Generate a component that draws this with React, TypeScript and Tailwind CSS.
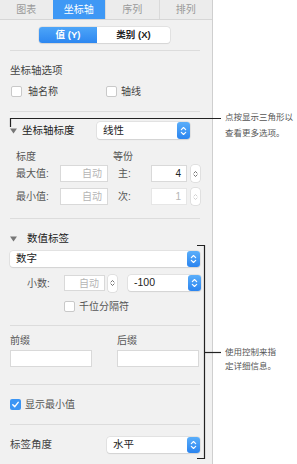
import React from "react";

function Chevrons({ color = "#fff", size = 7 }: { color?: string; size?: number }) {
  return (
    <svg width={size} height={size + 3} viewBox="0 0 8 11" fill="none">
      <path d="M1.5 4 L4 1.5 L6.5 4" stroke={color} strokeWidth="1.3" strokeLinecap="round" strokeLinejoin="round" />
      <path d="M1.5 7 L4 9.5 L6.5 7" stroke={color} strokeWidth="1.3" strokeLinecap="round" strokeLinejoin="round" />
    </svg>
  );
}

function Select({ label, className }: { label: string; className: string }) {
  return (
    <div className={`flex items-center justify-between rounded-[3px] bg-white shadow-[0_0_0_0.5px_#d4d4d4,0_1px_1px_rgba(0,0,0,0.12)] ${className}`}>
      <span className="pl-[6px] text-[10.5px] text-[#222]">{label}</span>
      <div className="flex h-full w-[13px] items-center justify-center rounded-[3px] bg-gradient-to-b from-[#5aaefa] to-[#2a84ef]">
        <Chevrons />
      </div>
    </div>
  );
}

function Stepper({ disabled }: { disabled?: boolean }) {
  return (
    <div className="flex h-[17px] w-[9px] items-center justify-center rounded-[3px] bg-white shadow-[0_0_0_0.5px_#d0d0d0]">
      <Chevrons color={disabled ? "#c8c8c8" : "#555"} size={5} />
    </div>
  );
}

function Input({ value, className, muted }: { value?: string; className: string; muted?: boolean }) {
  return (
    <div className={`flex items-center justify-end border border-[#d9d9d9] bg-white pr-[5px] text-[10px] ${muted ? "text-[#b5b5b5]" : "text-[#222]"} ${className}`}>
      {value}
    </div>
  );
}

function Checkbox({ checked }: { checked?: boolean }) {
  if (checked)
    return (
      <div className="flex h-[11px] w-[11px] items-center justify-center rounded-[2px] bg-[#3b95f4]">
        <svg width="9" height="9" viewBox="0 0 10 10" fill="none">
          <path d="M2 5.2 L4.2 7.4 L8 2.6" stroke="#fff" strokeWidth="1.6" strokeLinecap="round" strokeLinejoin="round" />
        </svg>
      </div>
    );
  return <div className="h-[11px] w-[11px] rounded-[2px] border border-[#c9c9c9] bg-white" />;
}

function Triangle() {
  return (
    <svg width="7" height="6" viewBox="0 0 7 6">
      <path d="M0 0.5 H7 L3.5 5.5 Z" fill="#777" />
    </svg>
  );
}

function Divider({ mt }: { mt: string }) {
  return <div className={`${mt} mr-[12px] h-px bg-[#dcdcdc]`} />;
}

export default function App() {
  const tabs = ["图表", "坐标轴", "序列", "排列"];
  return (
    <div className="relative flex h-[464px] w-[297px] overflow-hidden bg-white font-['Liberation_Sans','Noto_Sans_CJK_SC',sans-serif] text-[#333]">
      <div className="h-full w-[213px] border-r border-[#cfcfcf] bg-[#f1f1f1]">
        {/* tabs */}
        <div className="flex h-[20px] border-b border-[#d6d6d6] bg-[#ececec]">
          {tabs.map((t, i) => (
            <div
              key={t}
              className={`flex flex-1 items-center justify-center text-[10px] ${
                i === 1 ? "bg-[#3e98f5] text-white" : "text-[#9a9a9a]"
              } ${i > 1 ? "border-l border-[#dadada]" : ""}`}
            >
              {t}
            </div>
          ))}
        </div>

        <div className="pl-[10px]">
          {/* segmented */}
          <div className="mt-[7px] ml-[29px] flex h-[16px] w-[131px] overflow-hidden rounded-[3px] bg-white text-[9.5px] font-bold shadow-[0_0_0_0.5px_#d4d4d4,0_1px_1px_rgba(0,0,0,0.1)]">
            <div className="flex w-[58px] items-center justify-center bg-gradient-to-b from-[#4da5f8] to-[#2d87f0] text-white">值 (Y)</div>
            <div className="flex flex-1 items-center justify-center text-[#222]">类别 (X)</div>
          </div>

          <Divider mt="mt-[7px]" />

          <div className="mt-[10px] flex h-[20px] items-center text-[10.5px] text-[#444]">坐标轴选项</div>

          <div className="mt-[2px] flex h-[16px] items-center text-[10px] text-[#444]">
            <div className="ml-px"><Checkbox /></div>
            <span className="ml-[6px]">轴名称</span>
            <div className="ml-[48px]"><Checkbox /></div>
            <span className="ml-[4px]">轴线</span>
          </div>

          <Divider mt="mt-[12px]" />

          <div className="mt-[10px] flex h-[17px] items-center">
            <Triangle />
            <span className="ml-[5px] w-[75px] text-[10.5px] text-[#222]">坐标轴标度</span>
            <Select label="线性" className="h-[17px] w-[93px]" />
          </div>

          <div className="mt-[10px] flex h-[14px] items-center text-[10px] text-[#555]">
            <span className="ml-[6px] w-[97px]">标度</span>
            <span>等份</span>
          </div>

          <div className="mt-[2px] flex h-[17px] items-center text-[10px] text-[#555]">
            <span className="ml-[6px] w-[44px]">最大值:</span>
            <Input value="自动" muted className="h-[17px] w-[48px]" />
            <span className="ml-[10px] w-[33px]">主:</span>
            <Input value="4" className="h-[17px] w-[36px]" />
            <div className="ml-[4px]"><Stepper /></div>
          </div>

          <div className="mt-[6px] flex h-[17px] items-center text-[10px] text-[#555]">
            <span className="ml-[6px] w-[44px]">最小值:</span>
            <Input value="自动" muted className="h-[17px] w-[48px]" />
            <span className="ml-[10px] w-[33px]">次:</span>
            <Input value="1" muted className="h-[17px] w-[36px] border-[#e6e6e6]" />
            <div className="ml-[4px]"><Stepper disabled /></div>
          </div>

          <Divider mt="mt-[13px]" />

          <div className="mt-[12px] flex h-[16px] items-center">
            <Triangle />
            <span className="ml-[10px] text-[10.5px] text-[#222]">数值标签</span>
          </div>

          <Select label="数字" className="mt-[4px] mr-[12px] h-[16px]" />

          <div className="mt-[8px] flex h-[16px] items-center text-[10px] text-[#555]">
            <span className="ml-[17px] w-[37px]">小数:</span>
            <Input value="自动" muted className="h-[16px] w-[41px]" />
            <div className="ml-[3px]"><Stepper /></div>
            <Select label="-100" className="ml-[11px] h-[16px] w-[73px]" />
          </div>

          <div className="mt-[8px] flex h-[14px] items-center text-[10px] text-[#555]">
            <div className="ml-[54px]"><Checkbox /></div>
            <span className="ml-[4px]">千位分隔符</span>
          </div>

          <Divider mt="mt-[12px]" />

          <div className="mt-[7px] flex h-[14px] items-center text-[10px] text-[#555]">
            <span className="w-[107px]">前缀</span>
            <span>后缀</span>
          </div>

          <div className="mt-[3px] flex h-[17px]">
            <Input className="h-[17px] w-[82px]" />
            <Input className="ml-[25px] h-[17px] w-[82px]" />
          </div>

          <Divider mt="mt-[17px]" />

          <div className="mt-[12px] flex h-[14px] items-center text-[10px] text-[#555]">
            <Checkbox checked />
            <span className="ml-[4px]">显示最小值</span>
          </div>

          <Divider mt="mt-[13px]" />

          <div className="mt-[12px] flex h-[16px] items-center">
            <span className="w-[97px] text-[10.5px] text-[#444]">标签角度</span>
            <Select label="水平" className="h-[16px] w-[93px]" />
          </div>
        </div>
      </div>

      {/* callouts */}
      <svg className="pointer-events-none absolute left-0 top-0" width="297" height="464">
        <path d="M10.5 127 V118.5 H221" stroke="#222" strokeWidth="1.2" fill="none" />
        <path d="M197 245.5 H204.5 V458.5 H197" stroke="#222" strokeWidth="1.2" fill="none" />
        <path d="M204.5 352.5 H221" stroke="#222" strokeWidth="1.2" fill="none" />
      </svg>
      <div className="absolute left-[225px] top-[109px] text-[8.5px] leading-[16px] text-[#555]">
        点按显示三角形以
        <br />
        查看更多选项。
      </div>
      <div className="absolute left-[225px] top-[345px] text-[8.5px] leading-[14px] text-[#555]">
        使用控制来指
        <br />
        定详细信息。
      </div>
    </div>
  );
}
